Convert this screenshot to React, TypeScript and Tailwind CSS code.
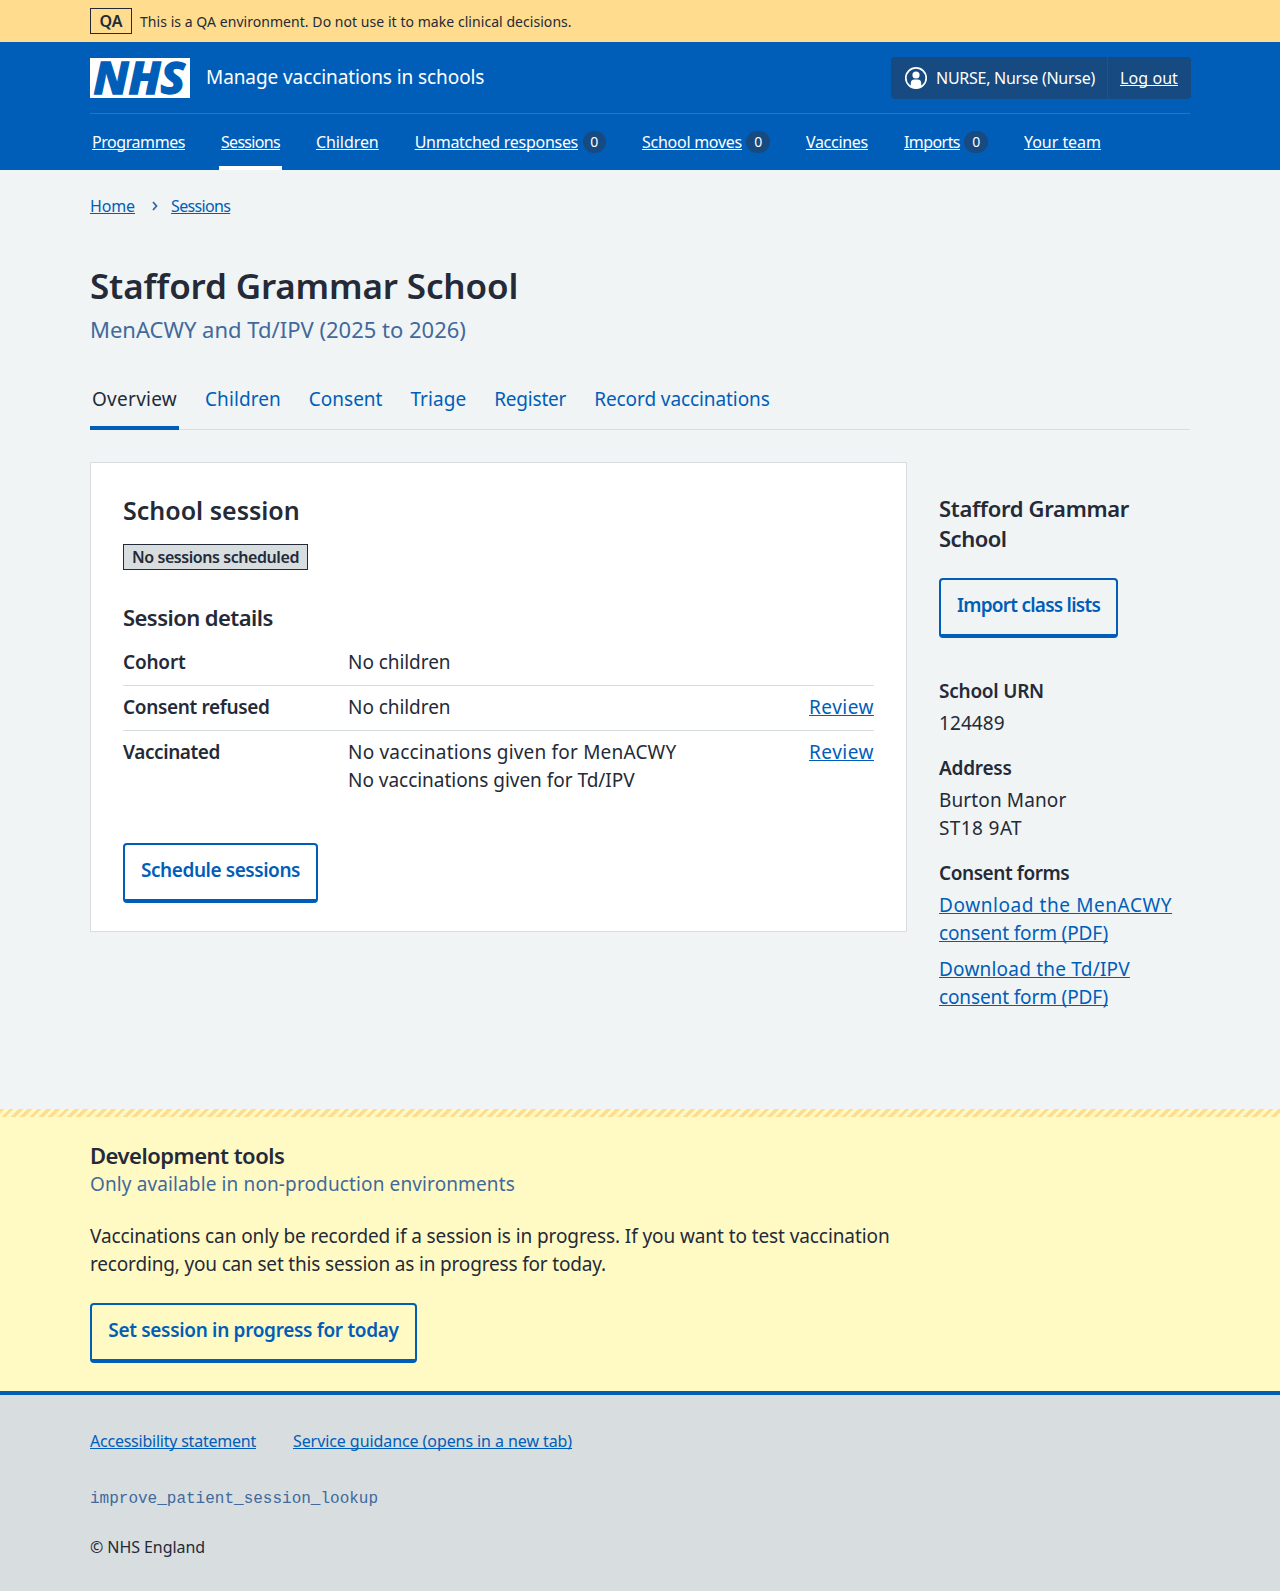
import type { ReactNode } from "react";

const underline = "underline decoration-1 underline-offset-1 [text-decoration-skip-ink:none]";
const link = "text-[#005eb8] underline decoration-1 underline-offset-1 [text-decoration-skip-ink:none]";

function Container({ children, className = "" }: { children: ReactNode; className?: string }) {
  return <div className={`mx-[90px] ${className}`}>{children}</div>;
}

function NhsLogo() {
  return (
    <svg
      width="100"
      height="40"
      viewBox="0 0 100 40"
      role="img"
      aria-label="NHS"
      className="block shrink-0 overflow-visible"
    >
      <rect width="100" height="40" fill="#fff" />
      <text
        x="3.5"
        y="36"
        fill="#005eb8"
        stroke="#005eb8"
        strokeWidth="1.3"
        fontFamily="'Noto Sans', sans-serif"
        fontSize="45"
        fontWeight="800"
        fontStyle="italic"
        textLength="91.5"
        lengthAdjust="spacingAndGlyphs"
      >
        NHS
      </text>
    </svg>
  );
}

function UserIcon() {
  return (
    <svg width="24" height="24" viewBox="0 0 24 24" aria-hidden="true" className="block shrink-0">
      <defs>
        <clipPath id="user-ring">
          <circle cx="12" cy="12" r="10.5" />
        </clipPath>
      </defs>
      <circle cx="12" cy="12" r="10.2" fill="none" stroke="#fff" strokeWidth="1.7" />
      <circle cx="12" cy="9" r="3.6" fill="#fff" />
      <rect x="6.8" y="13.6" width="10.4" height="12" rx="3.6" fill="#fff" clipPath="url(#user-ring)" />
    </svg>
  );
}

const navItems = [
  { label: "Programmes", spacing: "tracking-[-0.44px]" },
  { label: "Sessions", spacing: "tracking-[-0.69px]", current: true },
  { label: "Children", spacing: "tracking-[-0.07px]" },
  { label: "Unmatched responses", spacing: "tracking-[-0.28px]", count: 0 },
  { label: "School moves", spacing: "tracking-[-0.27px]", count: 0 },
  { label: "Vaccines", spacing: "tracking-[-0.29px]" },
  { label: "Imports", spacing: "tracking-[-0.56px]", count: 0 },
  { label: "Your team", spacing: "tracking-[-0.04px]" },
];

const tabs = [
  { label: "Overview", spacing: "tracking-[0.27px]", current: true },
  { label: "Children", spacing: "tracking-[0.07px]" },
  { label: "Consent", spacing: "tracking-[0px]" },
  { label: "Triage", spacing: "tracking-[0.05px]" },
  { label: "Register", spacing: "tracking-[-0.2px]" },
  { label: "Record vaccinations", spacing: "tracking-[-0.09px]" },
];

function SecondaryButton({ children, className }: { children: ReactNode; className: string }) {
  return (
    <button
      type="button"
      className={`block h-[60px] rounded-[4px] border-2 border-b-4 border-[#005eb8] pt-[11px] pb-[15px] text-center text-[19px] leading-7 font-semibold whitespace-nowrap text-[#005eb8] ${className}`}
    >
      {children}
    </button>
  );
}

function SummaryRow({
  term,
  children,
  action,
  border = true,
}: {
  term: ReactNode;
  children: ReactNode;
  action?: boolean;
  border?: boolean;
}) {
  return (
    <div className={`flex pt-[7px] ${border ? "border-b border-[#d8dde0] pb-[9px]" : ""}`}>
      <dt className="w-[225px] font-semibold">{term}</dt>
      <dd className="flex-1">{children}</dd>
      {action && (
        <dd>
          <a className={`${link} tracking-[0.5px]`}>Review</a>
        </dd>
      )}
    </div>
  );
}

export default function App() {
  return (
    <div className="min-h-[1591px] w-[1280px] bg-[#f0f4f5] font-['Noto_Sans',sans-serif] text-[19px] leading-7 text-[#242a37]">
      <div className="h-[42px] bg-[#ffdc8e]">
        <Container className="flex items-start pt-2">
          <strong className="flex h-[26px] w-[42px] justify-center border border-[#242a37] text-base font-semibold">
            QA
          </strong>
          <span className="mt-1 ml-2 text-sm leading-5 tracking-[0.05px]">
            This is a QA environment. Do not use it to make clinical decisions.
          </span>
        </Container>
      </div>

      <header className="h-[128px] bg-[#005eb8] text-white">
        <Container>
          <div className="flex h-[71px] items-start pt-4">
            <NhsLogo />
            <span className="mt-[5px] ml-4 tracking-[-0.09px]">Manage vaccinations in schools</span>
            <div className="-mt-px -mr-px ml-auto flex h-[42px] w-[300px] rounded-[4px] bg-[#164a80] text-base">
              <div className="flex w-[217px] items-start border-r border-[#0c58a4] pt-[9px] pl-[13px]">
                <UserIcon />
                <span className="ml-2 whitespace-nowrap tracking-[-0.27px]">NURSE, Nurse (Nurse)</span>
              </div>
              <a className={`mt-[9px] ml-[12px] tracking-[0.08px] ${underline}`}>Log out</a>
            </div>
          </div>
          <nav className="flex h-[57px] gap-8 border-t border-[#3a70ad] text-base">
            {navItems.map((item) => (
              <div
                key={item.label}
                className={`flex px-[2px] pt-4 ${item.current ? "border-b-4 border-white" : ""}`}
              >
                <a className={`block h-6 whitespace-nowrap ${underline} ${item.spacing}`}>{item.label}</a>
                {item.count !== undefined && (
                  <span className="mt-px ml-[4.5px] flex h-[22px] w-[23.5px] items-center justify-center rounded-full bg-[#164a80] text-sm leading-[22px]">
                    {item.count}
                  </span>
                )}
              </div>
            ))}
          </nav>
        </Container>
      </header>

      <main className="h-[939px]">
        <Container>
          <div className="flex pt-6 text-base">
            <a className={`${link} tracking-[-0.13px]`}>Home</a>
            <svg width="6" height="10" viewBox="0 0 6 10" className="mt-[7px] ml-[17px]" aria-hidden="true">
              <path d="M1 1l3.500 4L1 9" fill="none" stroke="#3465a0" strokeWidth="1.800" />
            </svg>
            <a className={`${link} ml-[13px] tracking-[-0.67px]`}>Sessions</a>
          </div>

          <h1 className="mt-[44px] text-[35px] leading-[48px] font-semibold tracking-[-0.15px]">
            Stafford Grammar School
          </h1>
          <p className="mt-1 text-[22px] leading-[30px] text-[#41699b]">MenACWY and Td/IPV (2025 to 2026)</p>

          <nav className="mt-[41px] flex h-[45px] gap-6 border-b border-[#d8dde0]">
            {tabs.map((tab) => (
              <a
                key={tab.label}
                className={`h-[45px] px-[2px] whitespace-nowrap ${
                  tab.current ? "border-b-4 border-[#005eb8]" : "text-[#005eb8]"
                } ${tab.spacing}`}
              >
                {tab.label}
              </a>
            ))}
          </nav>

          <div className="mt-8 flex items-start gap-8">
            <section className="h-[470px] w-[817px] border border-[#d8dde0] bg-white p-8">
              <h2 className="text-[25px] leading-[30px] font-semibold">School session</h2>
              <strong className="mt-[19px] flex h-[26px] w-[185px] justify-center border border-[#242a37] bg-[#d8dde0] text-base font-semibold whitespace-nowrap tracking-[-0.43px]">
                No sessions scheduled
              </strong>
              <h3 className="mt-8 text-[22px] leading-[30px] font-semibold tracking-[-0.55px]">Session details</h3>
              <dl className="mt-[9px]">
                <SummaryRow term={<span className="tracking-[-0.2px]">Cohort</span>}>
                  <span className="tracking-[-0.06px]">No children</span>
                </SummaryRow>
                <SummaryRow term={<span className="tracking-[-0.35px]">Consent refused</span>} action>
                  <span className="tracking-[-0.06px]">No children</span>
                </SummaryRow>
                <SummaryRow
                  term={<span className="tracking-[-0.41px]">Vaccinated</span>}
                  action
                  border={false}
                >
                  <span className="block tracking-[0.19px]">No vaccinations given for MenACWY</span>
                  <span className="block tracking-[-0.03px]">No vaccinations given for Td/IPV</span>
                </SummaryRow>
              </dl>
              <SecondaryButton className="mt-[49px] w-[195px] tracking-[-0.44px]">
                Schedule sessions
              </SecondaryButton>
            </section>

            <aside className="w-[251px] pt-[31px]">
              <h2 className="text-[22px] leading-[30px] font-semibold tracking-[-0.31px]">
                Stafford Grammar <span className="tracking-[-0.5px]">School</span>
              </h2>
              <SecondaryButton className="mt-[25px] w-[179px] tracking-[-0.76px]">
                Import class lists
              </SecondaryButton>
              <h3 className="mt-[39px] font-semibold tracking-[-0.24px]">School URN</h3>
              <p className="mt-1 tracking-[0.08px]">124489</p>
              <h3 className="mt-[17px] font-semibold tracking-[-0.25px]">Address</h3>
              <p className="mt-1">
                <span className="block tracking-[0.12px]">Burton Manor</span>
                <span className="block tracking-[0.39px]">ST18 9AT</span>
              </p>
              <h3 className="mt-[17px] font-semibold tracking-[-0.43px]">Consent forms</h3>
              <a className={`${link} mt-1 block`}>
                <span className="tracking-[0.58px]">Download the MenACWY</span>
                <br />
                <span className="tracking-[-0.13px]">consent form (PDF)</span>
              </a>
              <a className={`${link} mt-2 block`}>
                <span className="tracking-[0.21px]">Download the Td/IPV</span>
                <br />
                <span className="tracking-[-0.13px]">consent form (PDF)</span>
              </a>
            </aside>
          </div>
        </Container>
      </main>

      <section className="h-[282px] bg-[#fff9c4]">
        <div className="h-2 bg-[repeating-linear-gradient(-45deg,transparent_0,transparent_3.3px,#ffdc8e_3.3px,#ffdc8e_6.6px)]" />
        <Container className="pt-[23px]">
          <h2 className="text-[22px] leading-[30px] font-semibold tracking-[-0.5px]">Development tools</h2>
          <p className="tracking-[0.12px] text-[#41699b]">Only available in non-production environments</p>
          <p className="mt-6 w-[817px]">
            <span className="tracking-[-0.09px]">
              Vaccinations can only be recorded if a session is in progress. If you want to test vaccination{" "}
            </span>
            <span className="tracking-[-0.17px]">
              recording, you can set this session as in progress for today.
            </span>
          </p>
          <SecondaryButton className="mt-[25px] w-[327px] tracking-[-0.32px]">
            Set session in progress for today
          </SecondaryButton>
        </Container>
      </section>

      <footer className="h-[200px] border-t-4 border-[#005eb8] bg-[#d8dde0] text-base">
        <Container className="pt-[34px]">
          <div className="flex gap-[37px]">
            <a className={`${link} tracking-[-0.23px]`}>Accessibility statement</a>
            <a className={`${link} tracking-[-0.08px]`}>Service guidance (opens in a new tab)</a>
          </div>
          <p className="mt-[34px] font-['Liberation_Mono',monospace] text-[#41699b]">
            improve_patient_session_lookup
          </p>
          <p className="mt-6 tracking-[-0.07px]">© NHS England</p>
        </Container>
      </footer>
    </div>
  );
}
